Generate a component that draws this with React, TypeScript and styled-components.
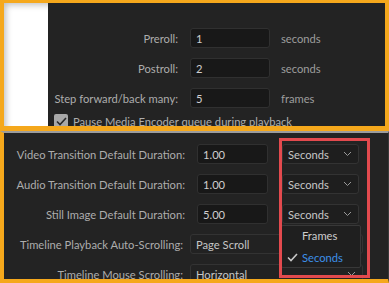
import React from 'react';
import styled, { createGlobalStyle } from 'styled-components';

const ORANGE = '#f5a81c';
const TEXT_SIZE = '11.2px';

const GlobalStyle = createGlobalStyle`
  html, body {
    margin: 0;
    padding: 0;
    background: #ffffff;
  }
  body {
    font-family: Lato, 'Open Sans', sans-serif;
    -webkit-font-smoothing: antialiased;
  }
`;

// 전체 캔버스
const Page = styled.div`
  width: 389px;
  height: 283px;
  overflow: hidden;
  display: flex;
  flex-direction: column;
  background: #232323;
`;

// 위쪽 캡처 (재생 설정)
const TopShot = styled.div`
  height: 131px;
  box-sizing: border-box;
  border-style: solid;
  border-color: ${ORANGE};
  border-width: 3px 4px 5px 4px;
  display: flex;
  overflow: hidden;
`;

// 왼쪽 흰 여백
const WhiteStrip = styled.div`
  width: 44px;
  background: #ffffff;
  box-shadow: inset 5px 5px 6px -3px rgba(0, 0, 0, 0.25);
`;

const DarkPane = styled.div`
  flex: 1;
  background: #232323;
  padding-top: 25px;
  display: flex;
  flex-direction: column;
`;

// 아래쪽 캡처 (타임라인 설정)
const BottomShot = styled.div`
  flex: 1;
  position: relative;
  box-sizing: border-box;
  border-top: 2px solid #9c9c9c;
  border-left: 4px solid ${ORANGE};
  border-bottom: 4px solid ${ORANGE};
  border-right: 1px solid #3a3a3a;
  background: #232323;
  padding-top: 11px;
  display: flex;
  flex-direction: column;
  gap: 10px;
  overflow: hidden;
`;

const Rows = styled.div`
  display: flex;
  flex-direction: column;
  gap: 10px;
`;

const Row = styled.div`
  display: flex;
  align-items: center;
  height: 20px;
`;

const Label = styled.span<{ $width: number }>`
  width: ${(p) => p.$width}px;
  flex: none;
  text-align: right;
  white-space: nowrap;
  font-size: ${TEXT_SIZE};
  color: #adadad;
`;

const Field = styled.div<{ $width: number; $gap: number }>`
  width: ${(p) => p.$width}px;
  margin-left: ${(p) => p.$gap}px;
  height: 20px;
  box-sizing: border-box;
  flex: none;
  display: flex;
  align-items: center;
  padding-left: 5px;
  background: #181818;
  border: 1px solid #303030;
  border-radius: 3px;
  font-size: ${TEXT_SIZE};
  color: #cfcfcf;
`;

const Unit = styled.span`
  margin-left: 11px;
  font-size: ${TEXT_SIZE};
  color: #9d9d9d;
`;

const CheckRow = styled.div`
  display: flex;
  align-items: center;
  gap: 5px;
  margin-top: 6px;
  padding-left: 6px;
  font-size: ${TEXT_SIZE};
  color: #adadad;
  white-space: nowrap;
`;

const CheckBox = styled.span`
  width: 14px;
  height: 14px;
  border-radius: 2px;
  background: #a8a8a8;
  display: flex;
  align-items: center;
  justify-content: center;
`;

const SelectWrap = styled.div`
  position: relative;
  flex: none;
`;

const Select = styled.div<{ $width: number; $gap: number; $flat?: boolean }>`
  width: ${(p) => p.$width}px;
  margin-left: ${(p) => p.$gap}px;
  height: 20px;
  box-sizing: border-box;
  flex: none;
  display: flex;
  align-items: center;
  justify-content: space-between;
  padding: 0 6px 0 5px;
  background: ${(p) => (p.$flat ? '#222222' : '#1e1e1e')};
  border: 1px solid #333333;
  border-radius: 3px;
  font-size: ${TEXT_SIZE};
  color: #c6c6c6;
`;

// 드롭다운 메뉴
const Menu = styled.div`
  position: absolute;
  top: 21px;
  left: 13px;
  width: 80px;
  height: 43px;
  box-sizing: border-box;
  background: #1f1f1f;
  border: 1px solid #383838;
  border-radius: 2px;
  display: flex;
  flex-direction: column;
  justify-content: center;
  gap: 6px;
  z-index: 2;
`;

const MenuItem = styled.div<{ $active?: boolean }>`
  display: flex;
  align-items: center;
  height: 16px;
  font-size: ${TEXT_SIZE};
  color: ${(p) => (p.$active ? '#3d8fe8' : '#cdcdcd')};
`;

const CheckSlot = styled.span`
  width: 20px;
  display: flex;
  justify-content: center;
`;

// 빨간 강조 박스
const Highlight = styled.div`
  position: absolute;
  left: 275px;
  top: 5px;
  width: 91px;
  height: 140px;
  box-sizing: border-box;
  border: 3px solid #e34a4e;
  pointer-events: none;
  z-index: 3;
`;

const Chevron = () => (
  <svg width="9" height="6" viewBox="0 0 9 6">
    <polyline points="1,1 4.5,4.5 8,1" fill="none" stroke="#9a9a9a" strokeWidth="1" />
  </svg>
);

const Tick = ({ color }: { color: string }) => (
  <svg width="11" height="9" viewBox="0 0 11 9">
    <polyline points="1,4.5 4,7.5 10,1" fill="none" stroke={color} strokeWidth="1.6" />
  </svg>
);

const playback = [
  { label: 'Preroll:', value: '1', unit: 'seconds' },
  { label: 'Postroll:', value: '2', unit: 'seconds' },
  { label: 'Step forward/back many:', value: '5', unit: 'frames' },
];

const durations = [
  { label: 'Video Transition Default Duration:', value: '1.00' },
  { label: 'Audio Transition Default Duration:', value: '1.00' },
  { label: 'Still Image Default Duration:', value: '5.00', open: true },
];

const scrolling = [
  { label: 'Timeline Playback Auto-Scrolling:', value: 'Page Scroll' },
  { label: 'Timeline Mouse Scrolling:', value: 'Horizontal' },
];

const App = () => {
  return (
    <>
      <GlobalStyle />
      <Page>
        <TopShot>
          <WhiteStrip />
          <DarkPane>
            <Rows>
              {playback.map((r) => (
                <Row key={r.label}>
                  <Label $width={130}>{r.label}</Label>
                  <Field $width={80} $gap={12}>
                    {r.value}
                  </Field>
                  <Unit>{r.unit}</Unit>
                </Row>
              ))}
            </Rows>
            <CheckRow>
              <CheckBox>
                <Tick color="#2a2a2a" />
              </CheckBox>
              Pause Media Encoder queue during playback
            </CheckRow>
          </DarkPane>
        </TopShot>

        <BottomShot>
          <Rows>
            {durations.map((r) => (
              <Row key={r.label}>
                <Label $width={181}>{r.label}</Label>
                <Field $width={71} $gap={12}>
                  {r.value}
                </Field>
                <SelectWrap>
                  <Select $width={77} $gap={14}>
                    Seconds
                    <Chevron />
                  </Select>
                  {r.open && (
                    <Menu>
                      <MenuItem>
                        <CheckSlot />
                        Frames
                      </MenuItem>
                      <MenuItem $active>
                        <CheckSlot>
                          <Tick color="#c8c8c8" />
                        </CheckSlot>
                        Seconds
                      </MenuItem>
                    </Menu>
                  )}
                </SelectWrap>
              </Row>
            ))}
          </Rows>
          <Rows>
            {scrolling.map((r) => (
              <Row key={r.label}>
                <Label $width={179}>{r.label}</Label>
                <Select $width={173} $gap={7} $flat>
                  {r.value}
                  <Chevron />
                </Select>
              </Row>
            ))}
          </Rows>
          <Highlight />
        </BottomShot>
      </Page>
    </>
  );
};

export default App;
